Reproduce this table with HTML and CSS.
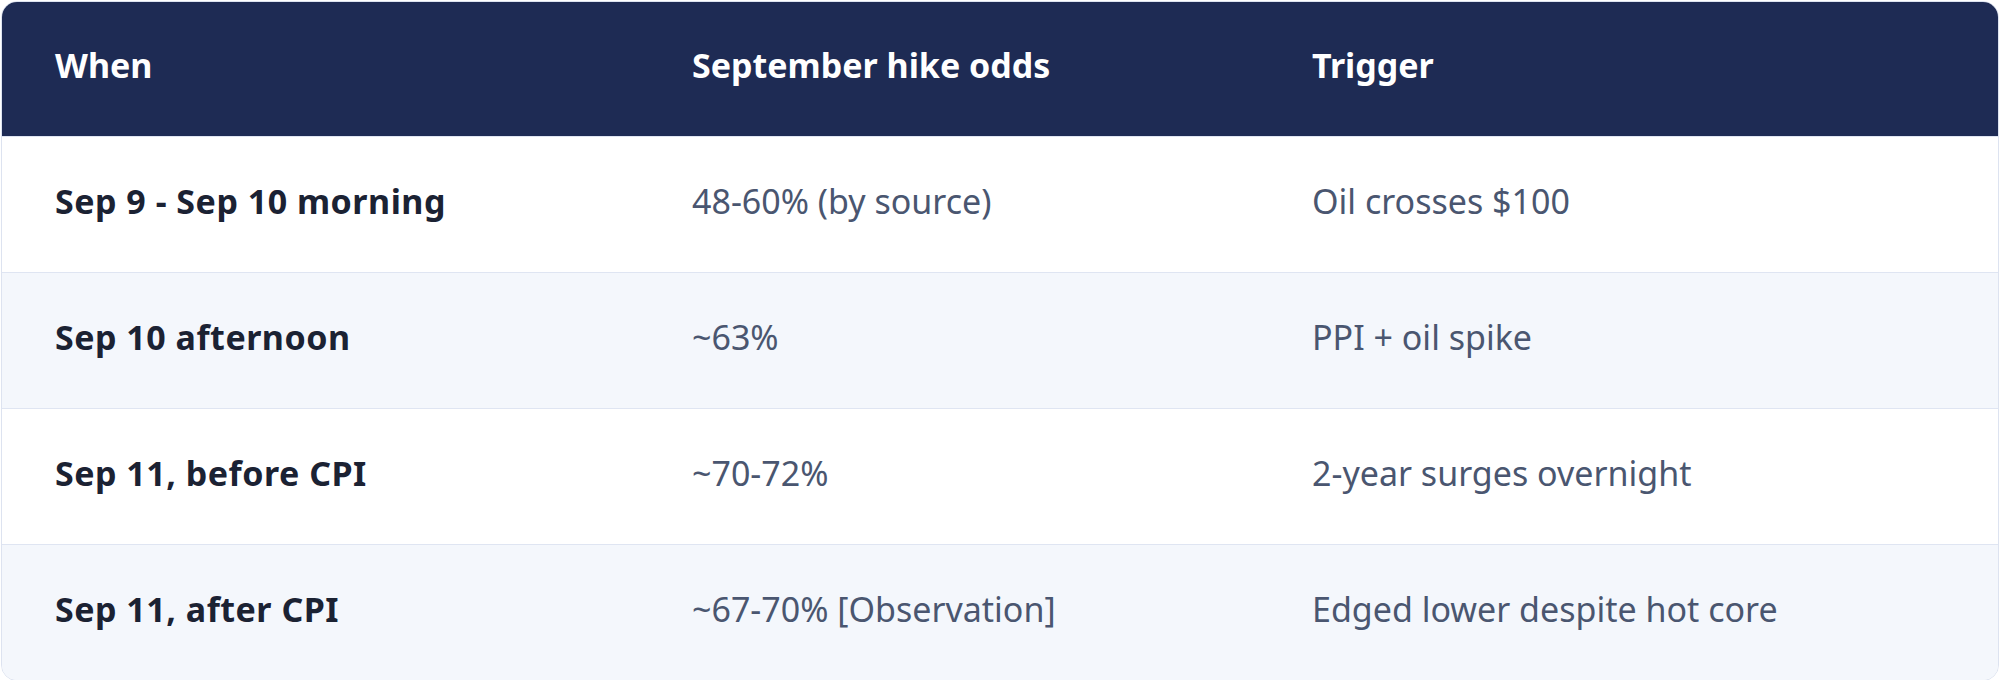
FILE: index.html
```html
<!DOCTYPE html>
<html lang="en">
<head>
<meta charset="utf-8">
<title>September hike odds</title>
<link rel="stylesheet" href="styles.css">
</head>
<body>
<div class="card">
  <div class="row head">
    <div class="cell">When</div>
    <div class="cell">September hike odds</div>
    <div class="cell">Trigger</div>
  </div>
  <div class="row">
    <div class="cell when">Sep 9 - Sep 10 morning</div>
    <div class="cell">48-60% (by source)</div>
    <div class="cell">Oil crosses $100</div>
  </div>
  <div class="row alt">
    <div class="cell when">Sep 10 afternoon</div>
    <div class="cell">~63%</div>
    <div class="cell">PPI + oil spike</div>
  </div>
  <div class="row">
    <div class="cell when">Sep 11, before CPI</div>
    <div class="cell">~70-72%</div>
    <div class="cell">2-year surges overnight</div>
  </div>
  <div class="row alt last">
    <div class="cell when">Sep 11, after CPI</div>
    <div class="cell">~67-70% [Observation]</div>
    <div class="cell">Edged lower despite hot core</div>
  </div>
</div>
</body>
</html>
```

FILE: styles.css
```css
html, body {
  margin: 0;
  padding: 0;
  background: #ffffff;
}
body {
  padding: 1px;
  font-family: "Noto Sans", "Noto Sans CJK KR", sans-serif;
}
.card {
  border: 1px solid #dde3f0;
  border-radius: 16px;
  overflow: hidden;
  background: #ffffff;
  width: 1996px;
}
.row {
  display: grid;
  grid-template-columns: 637px 620px 1fr;
  height: 135px;
  border-top: 1px solid #dfe5f2;
  font-size: 34px;
  color: #4a5670;
}
.row.head {
  border-top: none;
  height: 134px;
  background: #1e2b54;
  color: #ffffff;
  font-weight: 700;
}
.row.alt {
  background: #f4f7fc;
}
.cell {
  display: flex;
  align-items: center;
  padding: 0 0 8px 53px;
  line-height: 1;
  white-space: nowrap;
}
.cell.when {
  font-weight: 700;
  letter-spacing: 0.5px;
  color: #1b2233;
}
```
